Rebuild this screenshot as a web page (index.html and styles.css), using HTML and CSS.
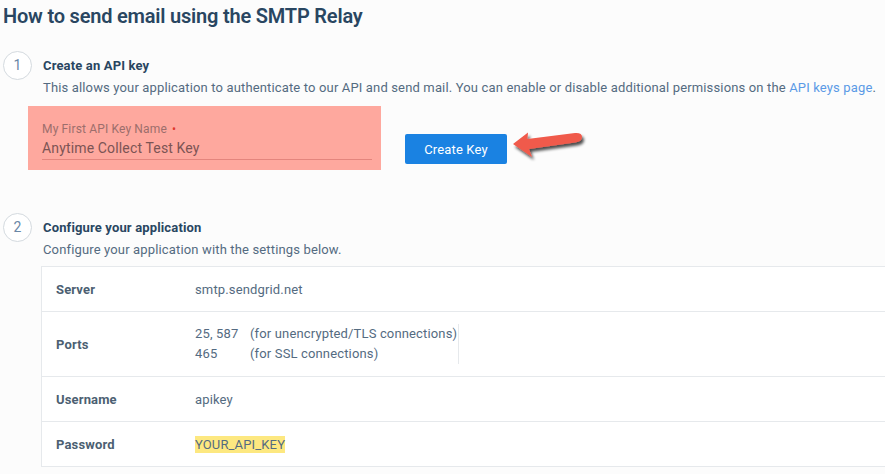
FILE: index.html
```html
<!DOCTYPE html>
<html>
<head>
<meta charset="utf-8">
<link rel="stylesheet" href="styles.css">
</head>
<body>
<div class="page">
  <h1 class="title">How to send email using the SMTP Relay</h1>

  <section class="step step-1">
    <div class="step-head">
      <span class="num">1</span>
      <h2 class="step-title">Create an API key</h2>
    </div>
    <p class="step-desc">This allows your application to authenticate to our API and send mail. You can enable or disable additional permissions on the <a class="link">API keys page</a>.</p>
    <div class="key-row">
      <div class="key-field">
        <label class="field-label">My First API Key Name <span class="req">•</span></label>
        <div class="field-value">Anytime Collect Test Key</div>
      </div>
      <div class="btn-wrap">
        <button class="btn">Create Key</button>
        <svg class="arrow" width="80" height="36" viewBox="0 0 80 36">
          <defs>
            <filter id="sh" x="-20%" y="-40%" width="150%" height="200%">
              <feGaussianBlur in="SourceAlpha" stdDeviation="1.6"/>
              <feOffset dx="2" dy="3" result="b"/>
              <feComponentTransfer><feFuncA type="linear" slope="0.7"/></feComponentTransfer>
              <feMerge><feMergeNode/><feMergeNode in="SourceGraphic"/></feMerge>
            </filter>
          </defs>
          <g filter="url(#sh)">
            <path d="M2 16 L17 4.5 L16.5 11 L64 5 Q71 4.5 71 9 Q71 13.5 64 14.5 L18 21 L21 29 Z" fill="#f05a4b"/>
          </g>
        </svg>
      </div>
    </div>
  </section>

  <section class="step step-2">
    <div class="step-head">
      <span class="num">2</span>
      <h2 class="step-title">Configure your application</h2>
    </div>
    <p class="step-desc">Configure your application with the settings below.</p>
    <div class="settings">
      <div class="row">
        <div class="key">Server</div>
        <div class="val">smtp.sendgrid.net</div>
      </div>
      <div class="row row-tall">
        <div class="key">Ports</div>
        <div class="val ports">
          <div class="port-line"><span class="pn">25, 587</span><span>(for unencrypted/TLS connections)</span></div>
          <div class="port-line"><span class="pn">465</span><span>(for SSL connections)</span></div>
        </div>
      </div>
      <div class="row">
        <div class="key">Username</div>
        <div class="val">apikey</div>
      </div>
      <div class="row">
        <div class="key">Password</div>
        <div class="val"><mark class="hl">YOUR_API_KEY</mark></div>
      </div>
    </div>
  </section>
</div>
</body>
</html>
```

FILE: styles.css
```css
* { box-sizing: border-box; }
html, body { margin: 0; padding: 0; }
body {
  background: #fcfcfc;
  font-family: Roboto, "Liberation Sans", sans-serif;
  color: #546b81;
  width: 885px;
  height: 474px;
  overflow: hidden;
  letter-spacing: 0.15px;
}
.page { padding: 4px 0 0 3px; }
.title {
  margin: 0;
  font-size: 20px;
  line-height: 24px;
  font-weight: 600;
  color: #294661;
  letter-spacing: -0.2px;
}
.step { position: relative; }
.step-1 { margin-top: 22px; }
.step-2 { margin-top: 42px; }
.step-head {
  display: flex;
  align-items: center;
  gap: 11px;
  height: 30px;
}
.num {
  width: 29px;
  height: 29px;
  border: 1px solid #d4dadf;
  border-radius: 50%;
  display: flex;
  align-items: center;
  justify-content: center;
  font-size: 14px;
  color: #6a87a6;
  background: #fff;
}
.step-title {
  margin: 0;
  font-size: 13px;
  font-weight: 700;
  color: #294661;
}
.step-desc {
  margin: 0 0 0 40px;
  font-size: 13px;
  line-height: 16px;
  color: #546b81;
  white-space: nowrap;
}
.link { color: #5b9ae6; }
.key-row {
  display: flex;
  align-items: flex-start;
  margin: 10px 0 0 25px;
}
.key-field {
  width: 353px;
  height: 64px;
  background: #fea89e;
  padding: 16px 9px 0 14px;
}
.field-label {
  display: block;
  font-size: 12px;
  line-height: 14px;
  color: #9c6e6c;
}
.req { color: #e0382c; font-size: 12px; margin-left: 2px; }
.field-value {
  margin-top: 3px;
  font-size: 14px;
  line-height: 18px;
  color: #7c5454;
  padding-bottom: 2px;
  border-bottom: 1px solid #e4857d;
}
.btn-wrap {
  position: relative;
  margin: 28px 0 0 24px;
}
.btn {
  display: block;
  width: 102px;
  height: 30px;
  background: #1a82e2;
  border: 0;
  border-radius: 2px;
  color: #fff;
  font-family: Roboto, "Liberation Sans", sans-serif;
  font-size: 13px;
  letter-spacing: 0.15px;
  padding: 0;
}
.arrow {
  position: absolute;
  left: 106px;
  top: -6px;
}
.settings {
  margin: 8px 0 0 38px;
  width: 860px;
  background: #fff;
  border: 1px solid #e6e9ec;
  border-right: 0;
}
.row {
  display: flex;
  align-items: center;
  height: 45px;
  border-top: 1px solid #e6e9ec;
  font-size: 13px;
}
.row:first-child { border-top: 0; height: 44px; }
.row-tall { height: 65px; }
.key {
  width: 153px;
  padding-left: 14px;
  font-weight: 700;
  color: #4c5f72;
}
.val { color: #546b81; }
.ports {
  border-right: 1px solid #e6e9ec;
  padding-right: 1px;
  line-height: 20px;
}
.port-line { display: flex; }
.pn { width: 55px; }
.hl {
  background: #fde880;
  color: #546b81;
  padding: 1px 0;
}
```
